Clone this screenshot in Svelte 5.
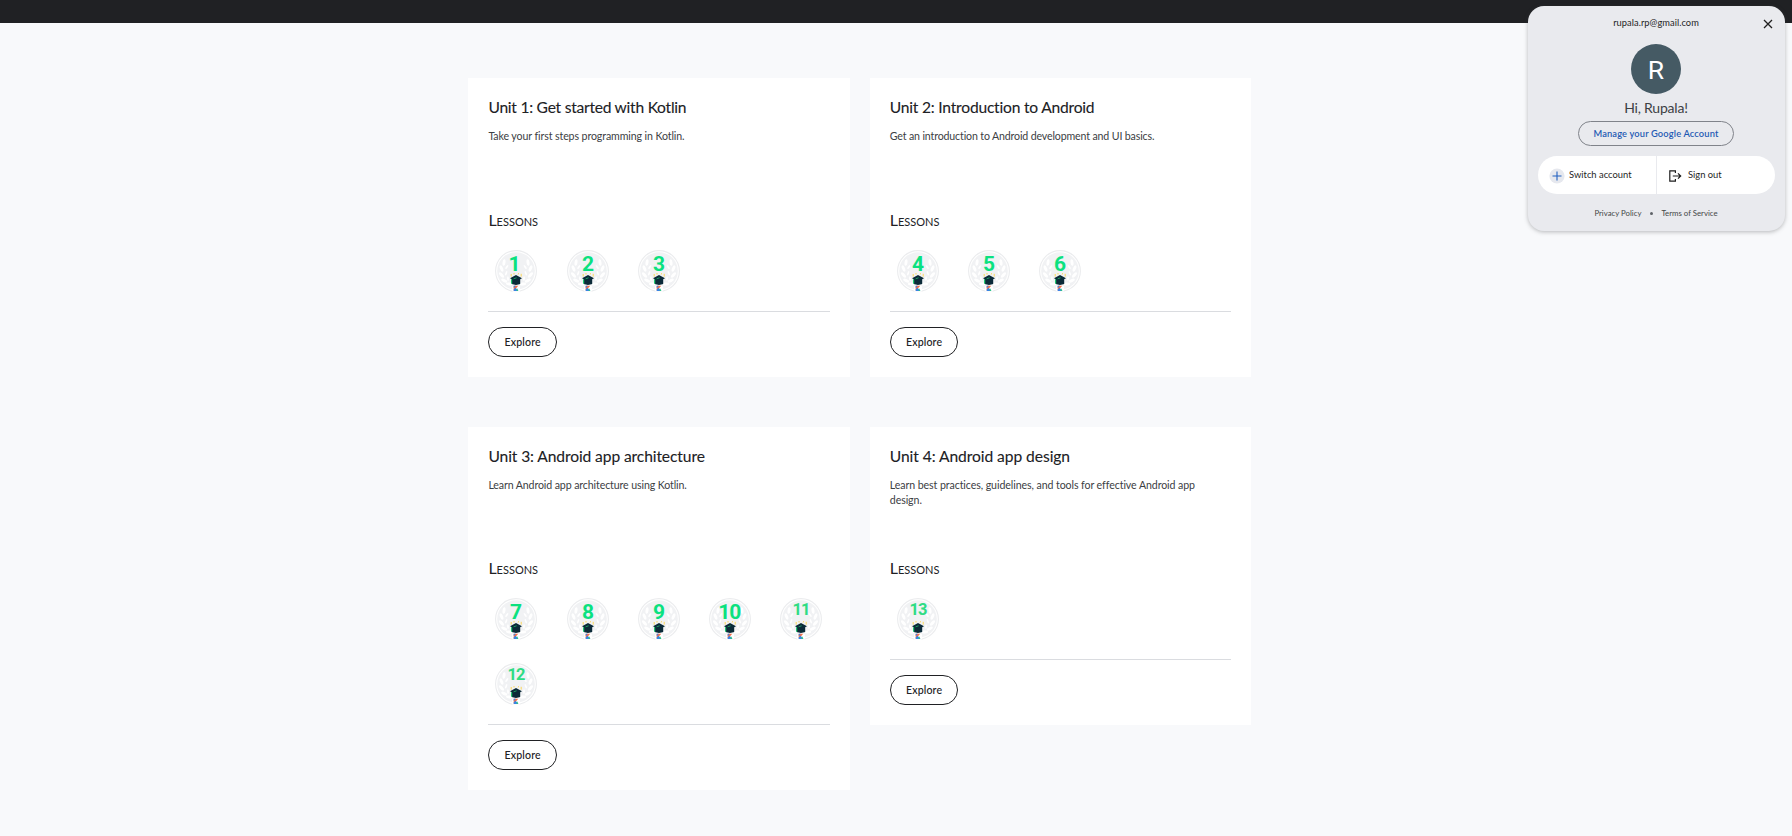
<script>
  const units = [
    {
      title: 'Unit 1: Get started with Kotlin',
      text: ['Take your first steps programming in Kotlin.'],
      lessons: [1, 2, 3],
      ts: -0.25,
      ds: -0.1
    },
    {
      title: 'Unit 2: Introduction to Android',
      text: ['Get an introduction to Android development and UI basics.'],
      lessons: [4, 5, 6],
      ts: -0.21,
      ds: -0.14
    },
    {
      title: 'Unit 3: Android app architecture',
      text: ['Learn Android app architecture using Kotlin.'],
      lessons: [7, 8, 9, 10, 11, 12],
      ts: -0.1,
      ds: -0.11
    },
    {
      title: 'Unit 4: Android app design',
      text: ['Learn best practices, guidelines, and tools for effective Android app', 'design.'],
      lessons: [13],
      ts: -0.06,
      ds: -0.08
    }
  ];

  // Leaves of the right laurel branch: x, y, rotation
  const leaves = [
    [33, 12.5, -8],
    [35.5, 18.5, 22],
    [35.5, 25, 42],
    [32.8, 30.6, 66],
    [27.8, 34, 84]
  ];
  const innerLeaves = [
    [30.2, 17, -34],
    [30.8, 23.2, -20],
    [29, 28.6, 4]
  ];
</script>

{#snippet badge(n)}
  <svg class="badge" viewBox="0 0 42 42" width="42" height="42">
    <circle cx="21" cy="21" r="20.4" fill="#fff" stroke="#ebecee" stroke-width="1.1" />
    <circle cx="21" cy="21" r="18.8" fill="#f1f2f4" />
    {#each [0, 1] as side}
      <g transform={side ? 'translate(42 0) scale(-1 1)' : undefined}>
        {#each leaves as [x, y, r]}
          <ellipse cx={x} cy={y} rx="1.5" ry="3.3" fill="#fff" transform="rotate({r} {x} {y})" />
        {/each}
        {#each innerLeaves as [x, y, r]}
          <ellipse cx={x} cy={y} rx="0.9" ry="2.4" fill="#fff" transform="rotate({r} {x} {y})" />
        {/each}
      </g>
    {/each}
    <text
      x={n === 1 ? 19.6 : n === 10 ? 20.3 : 21}
      y={n > 10 ? 17.2 : 21}
      text-anchor="middle"
      class="num"
      class:ten={n === 10}
      class:small={n > 10}>{n}</text>
    <path
      d="M16.2 24v2.6M19 23v1.5M23.6 23.2l-.4 1.3M26.2 23.8v2.8"
      stroke="#fbd75b"
      stroke-width="1"
      fill="none" />
    <path d="M15 28.2L21 25l6 3.2-1.8 1v4.8L21 35l-4.2-.9v-4.9z" fill="#0b2a38" />
    <path d="M16 29v4.6l1.2.4v-4.4z" fill="#1fc56f" />
    <path d="M18.6 28.8l3-1" stroke="#1fc56f" stroke-width="0.7" />
    <rect x="17" y="35.2" width="8" height="6.6" rx="1.5" fill="#fff" />
    <path d="M18.7 35.8h4.6l-4.6 5z" fill="#f2704a" />
    <path d="M18.7 35.8h2.2l-2.2 2.2z" fill="#3b82e6" />
    <path d="M18.7 40.9v-1.6l2-1.6 2.6 3.2z" fill="#3b82e6" />
    <path d="M21.2 39.2l1.2-.8.9 2.5h-1.4z" fill="#2fc487" />
  </svg>
{/snippet}

<header class="bar"></header>

<main class="grid">
  {#each units as u}
    <article class="card">
      <h2 style:letter-spacing="{u.ts}px">{u.title}</h2>
      <p class="desc" style:letter-spacing="{u.ds}px">
        {#each u.text as line}<span>{line}</span>{/each}
      </p>
      <h3>Lessons</h3>
      <div class="badges">
        {#each u.lessons as n}{@render badge(n)}{/each}
      </div>
      <hr />
      <button class="explore">Explore</button>
    </article>
  {/each}
</main>

<aside class="panel">
  <div class="email">rupala.rp@gmail.com</div>
  <svg class="close" viewBox="0 0 10 10" width="10" height="10">
    <path d="M1 1l8 8M9 1l-8 8" stroke="#1f1f1f" stroke-width="1.3" />
  </svg>
  <div class="avatar">R</div>
  <div class="hi">Hi, Rupala!</div>
  <button class="manage">Manage your Google Account</button>
  <div class="actions">
    <div class="action">
      <svg viewBox="0 0 16 16" width="16" height="16">
        <circle cx="8" cy="8" r="7.6" fill="#e6e8ee" />
        <path d="M8 3.5v9M3.5 8h9" stroke="#1f5fc0" stroke-width="1.1" />
      </svg>
      <span class="switch">Switch account</span>
    </div>
    <div class="action out">
      <svg viewBox="0 0 14 12" width="14" height="12">
        <path d="M7.4 3V.9H1.8v10.2h5.6V9" fill="none" stroke="#1f1f1f" stroke-width="1.2" />
        <path d="M4.8 6h7.8M10 3.3L12.7 6 10 8.7" fill="none" stroke="#1f1f1f" stroke-width="1.2" />
      </svg>
      <span class="signout">Sign out</span>
    </div>
  </div>
  <footer>
    <span class="privacy">Privacy Policy</span>
    <i></i>
    <span class="terms">Terms of Service</span>
  </footer>
</aside>

<style>
  :global(body) {
    margin: 0;
    height: 836px;
    overflow: hidden;
    background: #f8f9fb;
    font-family: Lato, sans-serif;
    font-variant-ligatures: none;
    color: #202124;
  }
  .bar {
    height: 23px;
    background: #202124;
  }
  .grid {
    display: grid;
    grid-template-columns: 381.4px 381.4px;
    column-gap: 20px;
    row-gap: 50px;
    align-items: start;
    padding: 55px 0 0 468.4px;
  }
  .card {
    box-sizing: border-box;
    background: #fff;
    padding: 19px 20px 20px;
    display: flex;
    flex-direction: column;
    align-items: flex-start;
  }
  h2 {
    margin: 0;
    font-size: 15.6px;
    line-height: 20px;
    font-weight: 400;
    white-space: nowrap;
    color: #202124;
    -webkit-text-stroke: 0.1px #202124;
  }
  .desc {
    margin: 12px 0 0;
    height: 73.6px;
    font-size: 10.6px;
    line-height: 15px;
    color: #3c4043;
  }
  .desc span {
    display: block;
    white-space: nowrap;
  }
  h3 {
    margin: 0;
    font-size: 16px;
    line-height: 34.6px;
    height: 44px;
    font-weight: 400;
    font-variant: small-caps;
  }
  .badges {
    display: grid;
    grid-template-columns: repeat(5, 42px);
    column-gap: 29.2px;
    row-gap: 23px;
    padding: 3px 0 19px 7px;
  }
  .badge {
    display: block;
  }
  .num {
    font: 700 21px Roboto, sans-serif;
    fill: #0be17f;
  }
  .num.ten {
    letter-spacing: -1px;
  }
  .num.small {
    font-size: 16.5px;
    letter-spacing: -1px;
    fill: #2fdc84;
  }
  hr {
    width: 100%;
    height: 1px;
    border: 0;
    margin: 0;
    background: #dadce0;
  }
  .explore {
    margin-top: 15px;
    box-sizing: border-box;
    width: 68.5px;
    height: 30px;
    padding: 0;
    border: 1px solid #202124;
    border-radius: 15px;
    background: #fff;
    color: #202124;
    font: 500 10.6px/26px Lato, sans-serif;
    letter-spacing: 0.15px;
  }
  .panel {
    position: absolute;
    left: 1528px;
    top: 6px;
    box-sizing: border-box;
    width: 257px;
    height: 225px;
    padding-right: 1px;
    border-radius: 16px;
    background: #e9eaee;
    box-shadow: 0 1px 4px rgba(60, 64, 67, 0.35);
    display: flex;
    flex-direction: column;
    align-items: center;
    white-space: nowrap;
  }
  .email {
    margin-top: 10px;
    font-size: 9.3px;
    line-height: 14px;
    height: 14px;
    letter-spacing: 0.05px;
    color: #1f1f1f;
  }
  .close {
    position: absolute;
    right: 12px;
    top: 13px;
  }
  .avatar {
    margin-top: 14px;
    width: 50px;
    height: 50px;
    border-radius: 50%;
    background: #455a64;
    color: #fff;
    font: 400 26.5px/51px Roboto, sans-serif;
    text-align: center;
  }
  .hi {
    font-size: 14px;
    line-height: 27px;
    height: 27px;
    letter-spacing: -0.2px;
    color: #3c4043;
  }
  .manage {
    box-sizing: border-box;
    width: 156px;
    height: 25px;
    padding: 0;
    border: 1px solid #80838a;
    border-radius: 13px;
    background: transparent;
    color: #1f5ab4;
    font: 600 9.3px/21px Lato, sans-serif;
    letter-spacing: 0.15px;
    white-space: nowrap;
  }
  .actions {
    align-self: flex-start;
    margin: 10px 0 0 10px;
    width: 237px;
    height: 38px;
    display: grid;
    grid-template-columns: 118px 118px;
    gap: 1px;
    border-radius: 19px;
    overflow: hidden;
  }
  .action {
    display: flex;
    align-items: center;
    background: #fff;
    padding-left: 11px;
    font-size: 9.4px;
    color: #1f1f1f;
  }
  .action span {
    margin: -2px 0 0 4px;
  }
  .action svg {
    margin-top: 1px;
  }
  .action.out span {
    margin-left: 6px;
  }
  footer {
    margin-top: 12px;
    display: flex;
    align-items: center;
    font-size: 7.8px;
    line-height: 14px;
    color: #444746;
  }
  footer i {
    width: 3px;
    height: 3px;
    border-radius: 50%;
    margin: 0 8.5px;
    background: #5f6368;
  }
</style>
